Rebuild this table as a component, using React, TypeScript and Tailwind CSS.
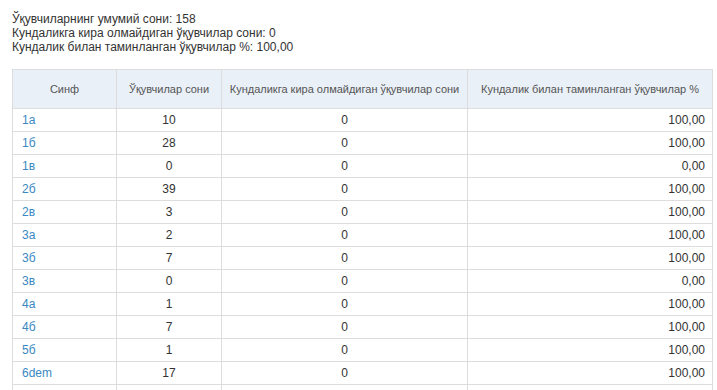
const rows = [
  { name: '1а', total: 10, missing: 0, pct: '100,00' },
  { name: '1б', total: 28, missing: 0, pct: '100,00' },
  { name: '1в', total: 0, missing: 0, pct: '0,00' },
  { name: '2б', total: 39, missing: 0, pct: '100,00' },
  { name: '2в', total: 3, missing: 0, pct: '100,00' },
  { name: '3а', total: 2, missing: 0, pct: '100,00' },
  { name: '3б', total: 7, missing: 0, pct: '100,00' },
  { name: '3в', total: 0, missing: 0, pct: '0,00' },
  { name: '4а', total: 1, missing: 0, pct: '100,00' },
  { name: '4б', total: 7, missing: 0, pct: '100,00' },
  { name: '5б', total: 1, missing: 0, pct: '100,00' },
  { name: '6dem', total: 17, missing: 0, pct: '100,00' },
]

export default function App() {
  return (
    <div className="bg-white text-[#333] text-[12px] leading-[14px] font-['Liberation_Sans',Arial,sans-serif] px-3 pt-3">
      {/* Summary */}
      <div>
        <div>Ўқувчиларнинг умумий сони: 158</div>
        <div>Кундаликга кира олмайдиган ўқувчилар сони: 0</div>
        <div>Кундалик билан таминланган ўқувчилар %: 100,00</div>
      </div>

      <table className="mt-[15px] w-[700px] table-fixed border-collapse border border-[#dddddd]">
        <colgroup>
          <col className="w-[104px]" />
          <col className="w-[105px]" />
          <col className="w-[246px]" />
          <col className="w-[245px]" />
        </colgroup>
        <thead>
          <tr className="bg-[#e9f0f8] text-[#555] text-[11px]">
            <th className="h-[39px] border border-[#dddddd] font-normal text-center whitespace-nowrap">Синф</th>
            <th className="h-[39px] border border-[#dddddd] font-normal text-center whitespace-nowrap">Ўқувчилар сони</th>
            <th className="h-[39px] border border-[#dddddd] font-normal text-center whitespace-nowrap">Кундаликга кира олмайдиган ўқувчилар сони</th>
            <th className="h-[39px] border border-[#dddddd] font-normal text-center whitespace-nowrap">Кундалик билан таминланган ўқувчилар %</th>
          </tr>
        </thead>
        <tbody>
          {rows.map((r) => (
            <tr key={r.name}>
              <td className="h-[23px] border border-[#dddddd] pl-[9px]">
                <a className="text-[#3a88c2]">{r.name}</a>
              </td>
              <td className="h-[23px] border border-[#dddddd] text-center">{r.total}</td>
              <td className="h-[23px] border border-[#dddddd] text-center">{r.missing}</td>
              <td className="h-[23px] border border-[#dddddd] text-right pr-[7px]">{r.pct}</td>
            </tr>
          ))}
          <tr>
            <td className="h-[23px] border border-[#dddddd]" />
            <td className="h-[23px] border border-[#dddddd]" />
            <td className="h-[23px] border border-[#dddddd]" />
            <td className="h-[23px] border border-[#dddddd]" />
          </tr>
        </tbody>
      </table>
    </div>
  )
}
